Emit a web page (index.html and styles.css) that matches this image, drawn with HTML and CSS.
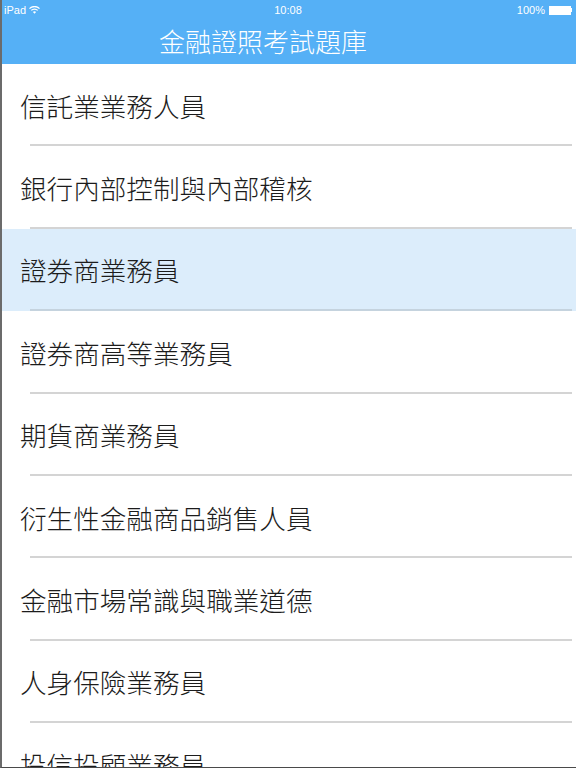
FILE: index.html
```html
<!DOCTYPE html>
<html lang="zh-Hant">

<head>
    <meta charset="UTF-8">
    <meta name="viewport" content="width=device-width, initial-scale=1.0">
    <title>金融證照考試題庫</title>
    <link rel="stylesheet" href="styles.css">
</head>

<body>
    <div class="screen">
        <div class="header">
            <div class="status-bar">
                <div class="status-left">
                    <span>iPad</span>
                    <svg class="wifi" width="11" height="8" viewBox="0 0 11 8">
                        <path d="M0.5 2.6 A7 7 0 0 1 10.5 2.6" fill="none" stroke="#fff" stroke-width="1.3"/>
                        <path d="M2.3 4.4 A4.5 4.5 0 0 1 8.7 4.4" fill="none" stroke="#fff" stroke-width="1.3"/>
                        <path d="M5.5 7.8 L3.9 6.1 A2.3 2.3 0 0 1 7.1 6.1 Z" fill="#fff"/>
                    </svg>
                </div>
                <div class="status-time">10:08</div>
                <div class="status-right">
                    <span>100%</span>
                    <div class="battery"><div class="battery-fill"></div></div>
                    <div class="battery-tip"></div>
                </div>
            </div>
            <div class="nav-bar">金融證照考試題庫</div>
        </div>

        <div class="list">
            <div class="list-item">信託業業務人員</div>
            <div class="list-item">銀行內部控制與內部稽核</div>
            <div class="list-item selected">證券商業務員</div>
            <div class="list-item">證券商高等業務員</div>
            <div class="list-item">期貨商業務員</div>
            <div class="list-item">衍生性金融商品銷售人員</div>
            <div class="list-item">金融市場常識與職業道德</div>
            <div class="list-item">人身保險業務員</div>
            <div class="list-item">投信投顧業務員</div>
        </div>
    </div>
</body>

</html>
```

FILE: styles.css
```css
body {
    margin: 0;
    padding: 0;
    background: #fff;
    font-family: "Noto Sans CJK TC", "Noto Sans", sans-serif;
}

.screen {
    width: 576px;
    height: 768px;
    overflow: hidden;
    box-sizing: border-box;
    border-left: 2px solid #6b6b6b;
    border-bottom: 1px solid #4a4a4a;
}

.header {
    background: #55b0f6;
    color: #fff;
}

.status-bar {
    height: 20px;
    display: flex;
    align-items: center;
    justify-content: space-between;
    padding: 0 4px 0 2px;
    font-family: "Liberation Sans", Arial, sans-serif;
    font-size: 11px;
}

.status-left,
.status-right {
    width: 120px;
    display: flex;
    align-items: center;
    gap: 3px;
}

.status-right {
    justify-content: flex-end;
    gap: 4px;
}

.status-time {
    text-align: center;
}

.battery {
    width: 20px;
    height: 7px;
    border: 1px solid #fff;
    padding: 0;
}

.battery-fill {
    width: 100%;
    height: 100%;
    background: #fff;
}

.battery-tip {
    width: 1px;
    height: 4px;
    background: #fff;
    margin-left: -4px;
}

.nav-bar {
    height: 44px;
    display: flex;
    align-items: center;
    justify-content: center;
    font-size: 26px;
    font-weight: 300;
    padding: 0 52px 3px 0;
    box-sizing: border-box;
}

.list-item {
    position: relative;
    height: 82.4px;
    display: flex;
    align-items: center;
    padding-left: 18px;
    font-size: 26.6px;
    font-weight: 300;
    color: #1c1c1c;
    box-sizing: border-box;
}

.list-item::after {
    content: "";
    position: absolute;
    left: 28px;
    right: 4px;
    bottom: 0;
    height: 2px;
    background: #d4d4d4;
}

.list-item.selected {
    background: #dcedfb;
}

.list-item.selected::after {
    background: #c5d3de;
}
```
